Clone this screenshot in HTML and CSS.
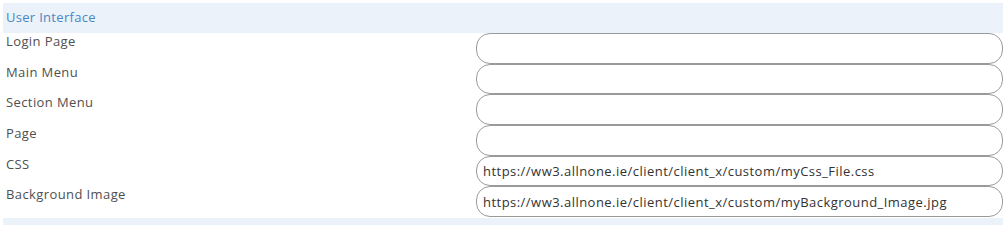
FILE: index.html
```html
<!DOCTYPE html>
<html>
<head>
<meta charset="utf-8">
<link rel="stylesheet" href="styles.css">
</head>
<body>
<div class="panel">
  <div class="panel-head">User Interface</div>
  <div class="rows">
    <div class="row"><div class="label">Login Page</div><input class="field" type="text" value=""></div>
    <div class="row"><div class="label">Main Menu</div><input class="field" type="text" value=""></div>
    <div class="row"><div class="label">Section Menu</div><input class="field" type="text" value=""></div>
    <div class="row"><div class="label">Page</div><input class="field" type="text" value=""></div>
    <div class="row"><div class="label">CSS</div><input class="field" type="text" value="https://ww3.allnone.ie/client/client_x/custom/myCss_File.css"></div>
    <div class="row"><div class="label">Background Image</div><input class="field" type="text" value="https://ww3.allnone.ie/client/client_x/custom/myBackground_Image.jpg"></div>
  </div>
  <div class="panel-foot"></div>
</div>
</body>
</html>
```
FILE: styles.css
```css
html, body {
  margin: 0;
  padding: 0;
  background: #ffffff;
}
body {
  padding: 3px 4px 0 3px;
  font-family: "Open Sans", "DejaVu Sans", sans-serif;
}
.panel {
  display: flex;
  flex-direction: column;
}
.panel-head {
  background: #ebf2fa;
  color: #4a87c2;
  font-size: 13px;
  letter-spacing: 0.3px;
  height: 30px;
  line-height: 28px;
  padding-left: 3px;
}
.rows {
  display: flex;
  flex-direction: column;
}
.row {
  display: grid;
  grid-template-columns: 473px 1fr;
  height: 30.67px;
}
.label {
  color: #505050;
  font-size: 13px;
  letter-spacing: 0.4px;
  padding: 0 0 0 3px;
  line-height: 16px;
}
.field {
  box-sizing: border-box;
  height: 30.67px;
  margin: 0;
  border: 1px solid #9a9a9a;
  border-radius: 14px;
  padding: 0 6px;
  font-family: "Open Sans", "DejaVu Sans", sans-serif;
  font-size: 13px;
  letter-spacing: 0.47px;
  color: #333333;
  background: #ffffff;
  outline: none;
}
.panel-foot {
  background: #ebf2fa;
  height: 10px;
  margin-top: 1px;
}
```
